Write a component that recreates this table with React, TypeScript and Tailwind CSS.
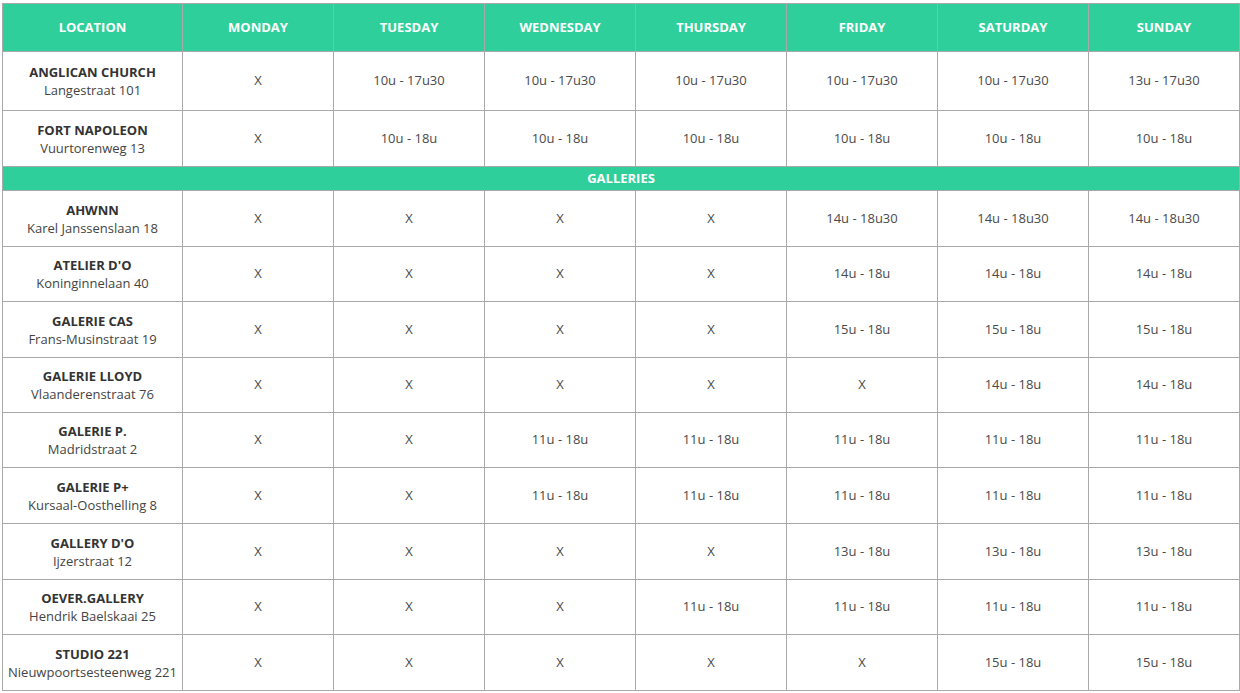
const days = ["MONDAY", "TUESDAY", "WEDNESDAY", "THURSDAY", "FRIDAY", "SATURDAY", "SUNDAY"];

interface Row {
  name: string;
  address: string;
  hours: string[];
  height: string;
}

const top: Row[] = [
  {
    name: "ANGLICAN CHURCH",
    address: "Langestraat 101",
    hours: ["X", "10u - 17u30", "10u - 17u30", "10u - 17u30", "10u - 17u30", "10u - 17u30", "13u - 17u30"],
    height: "h-[59px]",
  },
  {
    name: "FORT NAPOLEON",
    address: "Vuurtorenweg 13",
    hours: ["X", "10u - 18u", "10u - 18u", "10u - 18u", "10u - 18u", "10u - 18u", "10u - 18u"],
    height: "h-[56px]",
  },
];

const galleries: Row[] = [
  {
    name: "AHWNN",
    address: "Karel Janssenslaan 18",
    hours: ["X", "X", "X", "X", "14u - 18u30", "14u - 18u30", "14u - 18u30"],
    height: "h-[56px]",
  },
  {
    name: "ATELIER D'O",
    address: "Koninginnelaan 40",
    hours: ["X", "X", "X", "X", "14u - 18u", "14u - 18u", "14u - 18u"],
    height: "h-[55px]",
  },
  {
    name: "GALERIE CAS",
    address: "Frans-Musinstraat 19",
    hours: ["X", "X", "X", "X", "15u - 18u", "15u - 18u", "15u - 18u"],
    height: "h-[56px]",
  },
  {
    name: "GALERIE LLOYD",
    address: "Vlaanderenstraat 76",
    hours: ["X", "X", "X", "X", "X", "14u - 18u", "14u - 18u"],
    height: "h-[55px]",
  },
  {
    name: "GALERIE P.",
    address: "Madridstraat 2",
    hours: ["X", "X", "11u - 18u", "11u - 18u", "11u - 18u", "11u - 18u", "11u - 18u"],
    height: "h-[55px]",
  },
  {
    name: "GALERIE P+",
    address: "Kursaal-Oosthelling 8",
    hours: ["X", "X", "11u - 18u", "11u - 18u", "11u - 18u", "11u - 18u", "11u - 18u"],
    height: "h-[56px]",
  },
  {
    name: "GALLERY D'O",
    address: "Ijzerstraat 12",
    hours: ["X", "X", "X", "X", "13u - 18u", "13u - 18u", "13u - 18u"],
    height: "h-[56px]",
  },
  {
    name: "OEVER.GALLERY",
    address: "Hendrik Baelskaai 25",
    hours: ["X", "X", "X", "11u - 18u", "11u - 18u", "11u - 18u", "11u - 18u"],
    height: "h-[55px]",
  },
  {
    name: "STUDIO 221",
    address: "Nieuwpoortsesteenweg 221",
    hours: ["X", "X", "X", "X", "X", "15u - 18u", "15u - 18u"],
    height: "h-[56px]",
  },
];

const cell = "border border-[#a9a9a9] text-center align-middle p-0";

function BodyRow({ row }: { row: Row }) {
  return (
    <tr className={row.height}>
      <td className={cell}>
        <div className="font-bold text-[#333] leading-[18px]">{row.name}</div>
        <div className="text-[#444] leading-[18px]">{row.address}</div>
      </td>
      {row.hours.map((h, i) => (
        <td key={i} className={`${cell} text-[#4a4a4a]`}>
          {h}
        </td>
      ))}
    </tr>
  );
}

export default function App() {
  return (
    <div className="bg-white min-h-screen pl-[2px] pt-[3px] font-['Open_Sans',sans-serif] text-[13px]">
      <table className="w-[1237px] table-fixed border-collapse">
        <colgroup>
          <col className="w-[180px]" />
          {days.map((d) => (
            <col key={d} className="w-[151px]" />
          ))}
        </colgroup>
        <thead>
          <tr className="h-[48px] bg-[#2fcf9c]">
            <th className={`${cell} text-white font-bold`}>LOCATION</th>
            {days.map((d) => (
              <th key={d} className={`${cell} text-white font-bold`}>
                {d}
              </th>
            ))}
          </tr>
        </thead>
        <tbody>
          {top.map((r) => (
            <BodyRow key={r.name} row={r} />
          ))}
          <tr className="h-[24px] bg-[#2fcf9c]">
            <td colSpan={8} className={`${cell} text-white font-bold leading-none`}>
              GALLERIES
            </td>
          </tr>
          {galleries.map((r) => (
            <BodyRow key={r.name} row={r} />
          ))}
        </tbody>
      </table>
    </div>
  );
}
